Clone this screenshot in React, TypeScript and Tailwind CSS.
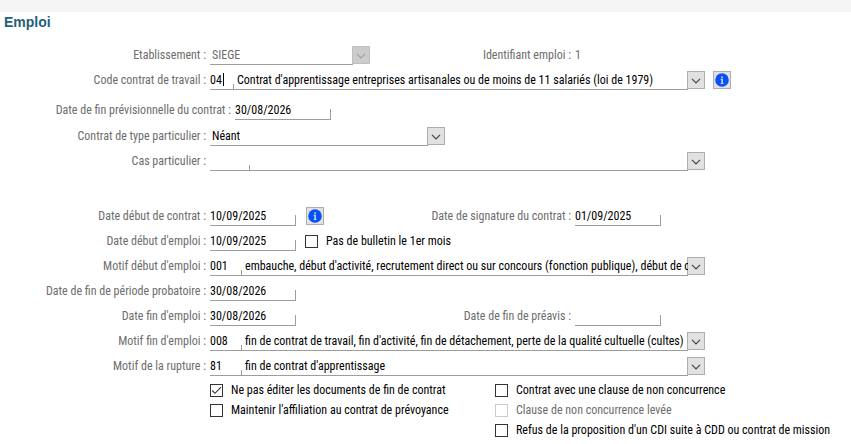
import { useState, type ReactNode } from "react";
import clsx from "clsx";

const Chevron = () => (
  <svg viewBox="0 0 10 6" className="mt-px h-[6px] w-[10px]" fill="none" stroke="currentColor" strokeWidth="1.2">
    <path d="M1 0.8 5 4.8 9 0.8" />
  </svg>
);

const InfoButton = ({ label }: { label: string }) => (
  <button
    type="button"
    aria-label={label}
    className="flex h-[18px] w-[18px] shrink-0 items-center justify-center border border-[#adadad] bg-[#e1e1e1]"
  >
    <svg viewBox="0 0 14 14" className="h-[14px] w-[14px]">
      <circle cx="7" cy="7" r="6.8" fill="#0750f5" />
      <rect x="6.4" y="3.4" width="1.4" height="1.4" fill="#fff" />
      <path d="M5.6 5.8h2.1v4.1h.8v.8H5.7v-.8h.8V6.6h-.9z" fill="#fff" />
    </svg>
  </button>
);

const Row = ({
  label,
  htmlFor,
  wide,
  className,
  children,
}: {
  label: string;
  htmlFor: string;
  wide?: boolean;
  className?: string;
  children: ReactNode;
}) => (
  <div className={clsx("flex h-[25px] items-end", className)}>
    <label
      htmlFor={htmlFor}
      className={clsx("mb-px mr-1 shrink-0 whitespace-nowrap text-right text-[#6d6d6d]", wide ? "w-[231px]" : "w-[206px]")}
    >
      {label} :
    </label>
    {children}
  </div>
);

const DateField = ({ id, value, medium }: { id: string; value: string; medium?: boolean }) => (
  <div className={clsx("flex shrink-0 items-end border-b border-[#9d9d9d]", medium ? "w-24" : "w-[86px]")}>
    <input id={id} defaultValue={value} className="h-[18px] w-full min-w-0 bg-transparent outline-none" />
    <span className="h-[10px] w-px shrink-0 bg-[#9d9d9d]" />
  </div>
);

const SelectField = ({
  id,
  value,
  disabled,
  className,
}: {
  id: string;
  value: string;
  disabled?: boolean;
  className: string;
}) => (
  <div className={clsx("relative shrink-0", className)}>
    <div className="mr-[17px] border-b border-[#9d9d9d]">
      <select
        id={id}
        disabled={disabled}
        defaultValue={value}
        className="block h-[18px] w-full appearance-none bg-transparent pl-[2px] outline-none disabled:text-[#6d6d6d] disabled:opacity-100"
      >
        <option>{value}</option>
      </select>
    </div>
    <span
      className={clsx(
        "pointer-events-none absolute right-0 top-0 flex h-[18px] w-[18px] items-center justify-center border",
        disabled ? "border-[#bfbfbf] bg-[#cccccc] text-[#a0a0a0]" : "border-[#adadad] bg-[#e1e1e1] text-[#444]",
      )}
    >
      <Chevron />
    </span>
  </div>
);

const codeWidths = {
  sm: "w-[23px]",
  md: "w-[31px]",
  lg: "w-[39px]",
};

const LookupField = ({
  id,
  code,
  text,
  size = "md",
  caret,
}: {
  id: string;
  code: string;
  text: string;
  size?: keyof typeof codeWidths;
  caret?: boolean;
}) => (
  <div className="flex w-full max-w-[495px] min-w-0 items-start">
    <div className="relative flex min-w-0 flex-1 items-end border-b border-[#9d9d9d]">
      <input
        id={id}
        defaultValue={code}
        className={clsx("h-[18px] shrink-0 bg-transparent outline-none", codeWidths[size])}
      />
      {caret && <span className="absolute left-[13px] top-[2px] h-[13px] w-px bg-black" />}
      <span className="mr-[3px] h-[5px] w-px shrink-0 bg-[#9d9d9d]" />
      <input
        aria-label={`Libellé ${id}`}
        readOnly
        value={text}
        className="h-[18px] min-w-0 flex-1 bg-transparent outline-none"
      />
    </div>
    <button
      type="button"
      aria-label="Ouvrir la liste"
      className="-ml-px flex h-[18px] w-[18px] shrink-0 items-center justify-center border border-[#adadad] bg-[#e1e1e1] text-[#444]"
    >
      <Chevron />
    </button>
  </div>
);

const Check = ({
  label,
  defaultChecked = false,
  disabled,
}: {
  label: string;
  defaultChecked?: boolean;
  disabled?: boolean;
}) => {
  const [checked, setChecked] = useState(defaultChecked);
  return (
    <label className={clsx("flex h-5 items-center gap-2 whitespace-nowrap", disabled && "text-[#6d6d6d]")}>
      <span className="relative h-[13px] w-[13px] shrink-0">
        <input
          type="checkbox"
          checked={checked}
          disabled={disabled}
          onChange={(e) => setChecked(e.target.checked)}
          className="block h-[13px] w-[13px] appearance-none border border-[#333] bg-white disabled:border-[#cccccc]"
        />
        {checked && (
          <svg
            viewBox="0 0 13 13"
            className="pointer-events-none absolute inset-0 h-[13px] w-[13px]"
            fill="none"
            stroke="#333"
            strokeWidth="1.1"
          >
            <path d="M2.2 6.5 5 9.3 11 3.2" />
          </svg>
        )}
      </span>
      {label}
    </label>
  );
};

export default function App() {
  return (
    <main className="min-h-screen bg-white font-['Roboto_Condensed',Lato,sans-serif] text-xs leading-[18px] text-black">
      <div className="h-3 bg-[#f5f5f5]" />
      <h1 className="pl-1 font-['Liberation_Sans',Arial,sans-serif] text-sm font-bold leading-5 text-[#1f6178]">
        Emploi
      </h1>

      <form className="pt-2">
        <Row label="Etablissement" htmlFor="etablissement">
          <div className="w-[210px] shrink-0">
            <SelectField id="etablissement" value="SIEGE" disabled className="w-[160px]" />
          </div>
          <span className="mb-px mr-1 w-[151px] shrink-0 text-right text-[#6d6d6d]">Identifiant emploi :</span>
          <span className="mb-px text-[#6d6d6d]">1</span>
        </Row>
        <Row label="Code contrat de travail" htmlFor="code-contrat">
          <LookupField
            id="code-contrat"
            code="04"
            text="Contrat d'apprentissage entreprises artisanales ou de moins de 11 salariés (loi de 1979)"
            size="sm"
            caret
          />
          <div className="mb-px ml-2 shrink-0">
            <InfoButton label="Aide code contrat" />
          </div>
        </Row>
        <Row label="Date de fin prévisionnelle du contrat" htmlFor="fin-prev" wide className="mt-[5px]">
          <DateField id="fin-prev" value="30/08/2026" medium />
        </Row>
        <Row label="Contrat de type particulier" htmlFor="type-particulier" className="mt-px">
          <SelectField id="type-particulier" value="Néant" className="w-[235px]" />
        </Row>
        <Row label="Cas particulier" htmlFor="cas-particulier">
          <LookupField id="cas-particulier" code="" text="" size="lg" />
        </Row>

        <Row label="Date début de contrat" htmlFor="debut-contrat" className="mt-[30px]">
          <div className="flex w-[210px] shrink-0 items-end gap-[10px]">
            <DateField id="debut-contrat" value="10/09/2025" />
            <div className="mb-px">
              <InfoButton label="Aide date début" />
            </div>
          </div>
          <label htmlFor="signature" className="mb-px mr-1 w-[151px] shrink-0 whitespace-nowrap text-right text-[#6d6d6d]">
            Date de signature du contrat :
          </label>
          <DateField id="signature" value="01/09/2025" />
        </Row>
        <Row label="Date début d'emploi" htmlFor="debut-emploi">
          <div className="flex items-end gap-[9px]">
            <DateField id="debut-emploi" value="10/09/2025" />
            <Check label="Pas de bulletin le 1er mois" />
          </div>
        </Row>
        <Row label="Motif début d'emploi" htmlFor="motif-debut">
          <LookupField
            id="motif-debut"
            code="001"
            text="embauche, début d'activité, recrutement direct ou sur concours (fonction publique), début de contrat"
          />
        </Row>
        <Row label="Date de fin de période probatoire" htmlFor="fin-probatoire">
          <DateField id="fin-probatoire" value="30/08/2026" />
        </Row>
        <Row label="Date fin d'emploi" htmlFor="fin-emploi">
          <div className="w-[210px] shrink-0">
            <DateField id="fin-emploi" value="30/08/2026" />
          </div>
          <label htmlFor="fin-preavis" className="mb-px mr-1 w-[151px] shrink-0 whitespace-nowrap text-right text-[#6d6d6d]">
            Date de fin de préavis :
          </label>
          <DateField id="fin-preavis" value="" />
        </Row>
        <Row label="Motif fin d'emploi" htmlFor="motif-fin">
          <LookupField
            id="motif-fin"
            code="008"
            text="fin de contrat de travail, fin d'activité, fin de détachement, perte de la qualité cultuelle (cultes)"
          />
        </Row>
        <Row label="Motif de la rupture" htmlFor="motif-rupture">
          <LookupField id="motif-rupture" code="81" text="fin de contrat d'apprentissage" />
        </Row>

        <div className="flex pl-[210px] pt-1">
          <div className="w-[285px] shrink-0">
            <Check label="Ne pas éditer les documents de fin de contrat" defaultChecked />
            <Check label="Maintenir l'affiliation au contrat de prévoyance" />
          </div>
          <div>
            <Check label="Contrat avec une clause de non concurrence" />
            <Check label="Clause de non concurrence levée" disabled />
            <Check label="Refus de la proposition d'un CDI suite à CDD ou contrat de mission" />
          </div>
        </div>
      </form>
    </main>
  );
}
